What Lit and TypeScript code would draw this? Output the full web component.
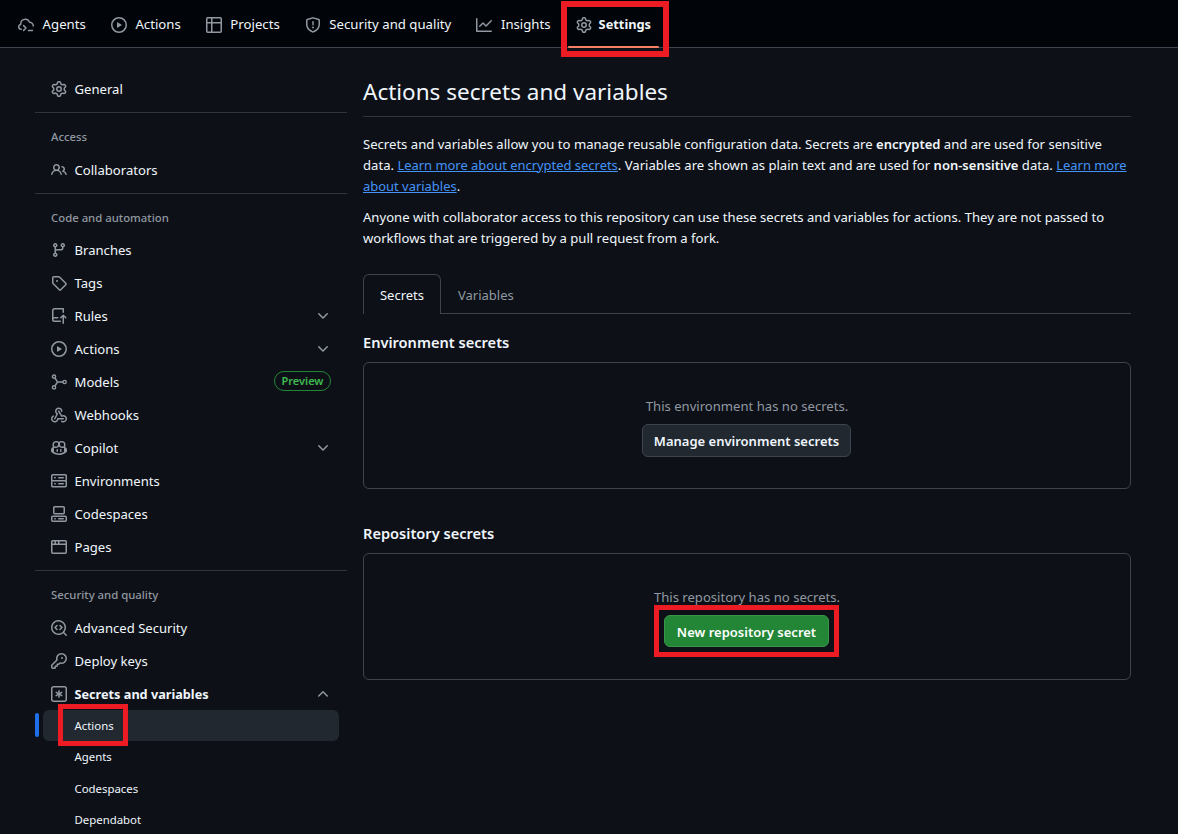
import { LitElement, html, css, svg } from "lit";
import { customElement } from "lit/decorators.js";

const gear = svg`<path d="M8 0a8.2 8.2 0 0 1 .701.031C9.444.095 9.99.645 10.16 1.29l.288 1.107c.018.066.079.158.212.224.231.114.454.243.668.386.123.082.233.09.299.071l1.103-.303c.644-.176 1.392.021 1.82.63.27.385.506.792.704 1.218.315.675.111 1.422-.364 1.891l-.814.806c-.049.048-.098.147-.088.294.016.257.016.515 0 .772-.01.147.038.246.088.294l.814.806c.475.469.679 1.216.364 1.891a7.977 7.977 0 0 1-.704 1.217c-.428.61-1.176.807-1.82.63l-1.102-.302c-.067-.019-.177-.011-.3.071a5.909 5.909 0 0 1-.668.386c-.133.066-.194.158-.211.224l-.29 1.106c-.168.646-.715 1.196-1.458 1.26a8.006 8.006 0 0 1-1.402 0c-.743-.064-1.289-.614-1.458-1.26l-.289-1.106c-.018-.066-.079-.158-.212-.224a5.738 5.738 0 0 1-.668-.386c-.123-.082-.233-.09-.299-.071l-1.103.303c-.644.176-1.392-.021-1.82-.63a8.12 8.12 0 0 1-.704-1.218c-.315-.675-.111-1.422.363-1.891l.815-.806c.05-.048.098-.147.088-.294a6.214 6.214 0 0 1 0-.772c.01-.147-.038-.246-.088-.294l-.815-.806C.635 6.045.431 5.298.746 4.623a7.92 7.92 0 0 1 .704-1.217c.428-.61 1.176-.807 1.82-.63l1.102.302c.067.019.177.011.3-.071.214-.143.437-.272.668-.386.133-.066.194-.158.211-.224l.29-1.106C6.009.645 6.556.095 7.299.03 7.53.01 7.764 0 8 0Zm-.571 1.525c-.036.003-.108.036-.137.146l-.289 1.105c-.147.561-.549.967-.998 1.189-.173.086-.34.183-.5.29-.417.278-.97.423-1.529.27l-1.103-.303c-.109-.03-.175.016-.195.045-.22.312-.412.644-.573.99-.014.031-.021.11.059.19l.815.806c.411.406.562.957.53 1.456a4.709 4.709 0 0 0 0 .582c.032.499-.119 1.05-.53 1.456l-.815.806c-.081.08-.073.159-.059.19.162.346.353.677.573.989.02.03.085.076.195.046l1.102-.303c.56-.153 1.113-.008 1.53.27.161.107.328.204.501.29.447.222.85.629.997 1.189l.289 1.105c.029.109.101.143.137.146a6.6 6.6 0 0 0 1.142 0c.036-.003.108-.036.137-.146l.289-1.105c.147-.561.549-.967.998-1.189.173-.086.34-.183.5-.29.417-.278.97-.423 1.529-.27l1.103.303c.109.029.175-.016.195-.045.22-.313.411-.644.573-.99.014-.031.021-.11-.059-.19l-.815-.806c-.411-.406-.562-.957-.53-1.456a4.709 4.709 0 0 0 0-.582c-.032-.499.119-1.05.53-1.456l.815-.806c.081-.08.073-.159.059-.19a6.464 6.464 0 0 0-.573-.989c-.02-.03-.085-.076-.195-.046l-1.102.303c-.56.153-1.113.008-1.53-.27a4.44 4.44 0 0 0-.501-.29c-.447-.222-.85-.629-.997-1.189l-.289-1.105c-.029-.11-.101-.143-.137-.146a6.6 6.6 0 0 0-1.142 0ZM11 8a3 3 0 1 1-6 0 3 3 0 0 1 6 0ZM9.5 8a1.5 1.5 0 1 0-3.001.001A1.5 1.5 0 0 0 9.5 8Z"/>`;
const play = svg`<path d="M8 0a8 8 0 1 1 0 16A8 8 0 0 1 8 0ZM1.5 8a6.5 6.5 0 1 0 13 0 6.5 6.5 0 0 0-13 0Zm4.879-2.773 4.264 2.559a.25.25 0 0 1 0 .428l-4.264 2.559A.25.25 0 0 1 6 10.559V5.442a.25.25 0 0 1 .379-.215Z"/>`;
const agent = svg`<g fill="none" stroke="currentColor" stroke-width="1.5" stroke-linecap="round" stroke-linejoin="round"><path d="M3.25 12.25H3A2.25 2.25 0 0 1 .75 10v-.4c0-1 .7-1.9 1.7-2.1l.35-.08-.06-.6A4.5 4.5 0 0 1 7.2 2.15h.2a4.2 4.2 0 0 1 3.9 2.6l.2.45c2 0 3.75 1.6 3.75 3.65v.15"/><path d="M5.6 8.6 8 11l-2.4 2.4M10.5 13.4h4"/></g>`;
const table = svg`<path d="M0 1.75C0 .784.784 0 1.75 0h12.5C15.216 0 16 .784 16 1.75v12.5A1.75 1.75 0 0 1 14.25 16H1.75A1.75 1.75 0 0 1 0 14.25ZM6.5 6.5v8h7.75a.25.25 0 0 0 .25-.25V6.5Zm8-1.5V1.75a.25.25 0 0 0-.25-.25H6.5V5Zm-13 1.5v7.75c0 .138.112.25.25.25H5v-8ZM5 5V1.5H1.75a.25.25 0 0 0-.25.25V5Z"/>`;
const shield = svg`<path d="M8.533.133a1.75 1.75 0 0 0-1.066 0l-5.25 1.68A1.75 1.75 0 0 0 1 3.48V7c0 1.566.32 3.182 1.303 4.682.983 1.498 2.585 2.813 5.032 3.855a1.697 1.697 0 0 0 1.33 0c2.447-1.042 4.049-2.357 5.032-3.855C14.68 10.182 15 8.566 15 7V3.48a1.75 1.75 0 0 0-1.217-1.667Zm-.61 1.429a.25.25 0 0 1 .153 0l5.25 1.68a.25.25 0 0 1 .174.238V7c0 1.358-.275 2.666-1.057 3.86-.784 1.194-2.121 2.34-4.366 3.297a.196.196 0 0 1-.154 0c-2.245-.956-3.582-2.104-4.366-3.298C2.775 9.666 2.5 8.36 2.5 7V3.48a.25.25 0 0 1 .174-.237l5.25-1.68ZM9 10.5a1 1 0 1 1-2 0 1 1 0 0 1 2 0Zm-.25-5.75a.75.75 0 1 0-1.5 0v3a.75.75 0 0 0 1.5 0Z"/>`;
const graph = svg`<path d="M1.5 1.75V13.5h13.75a.75.75 0 0 1 0 1.5H.75a.75.75 0 0 1-.75-.75V1.75a.75.75 0 0 1 1.5 0Zm14.28 2.53-5.25 5.25a.75.75 0 0 1-1.06 0L7 7.06 4.28 9.78a.751.751 0 0 1-1.042-.018.751.751 0 0 1-.018-1.042l3.25-3.25a.75.75 0 0 1 1.06 0L10 7.94l4.72-4.72a.751.751 0 0 1 1.042.018.751.751 0 0 1 .018 1.042Z"/>`;
const people = svg`<path d="M2 5.5a3.5 3.5 0 1 1 5.898 2.549 5.508 5.508 0 0 1 3.034 4.084.75.75 0 1 1-1.482.235 4 4 0 0 0-7.9 0 .75.75 0 0 1-1.482-.236A5.507 5.507 0 0 1 3.102 8.05 3.49 3.49 0 0 1 2 5.5ZM11 4a3.001 3.001 0 0 1 2.22 5.018 5.01 5.01 0 0 1 2.56 3.012.749.749 0 0 1-.885.954.752.752 0 0 1-.549-.514 3.507 3.507 0 0 0-2.522-2.372.75.75 0 0 1-.574-.73v-.352a.75.75 0 0 1 .416-.672A1.5 1.5 0 0 0 11 5.5.75.75 0 0 1 11 4Zm-5.5-.5a2 2 0 1 0-.001 3.999A2 2 0 0 0 5.5 3.5Z"/>`;
const branch = svg`<path d="M9.5 3.25a2.25 2.25 0 1 1 3 2.122V6A2.5 2.5 0 0 1 10 8.5H6a1 1 0 0 0-1 1v1.128a2.251 2.251 0 1 1-1.5 0V5.372a2.25 2.25 0 1 1 1.5 0v1.836A2.493 2.493 0 0 1 6 7h4a1 1 0 0 0 1-1v-.628A2.25 2.25 0 0 1 9.5 3.25Zm-6 0a.75.75 0 1 0 1.5 0 .75.75 0 0 0-1.5 0Zm8.25-.75a.75.75 0 1 0 0 1.5.75.75 0 0 0 0-1.5ZM4.25 12a.75.75 0 1 0 0 1.5.75.75 0 0 0 0-1.5Z"/>`;
const tag = svg`<path d="M1 7.775V2.75C1 1.784 1.784 1 2.75 1h5.025c.464 0 .91.184 1.238.513l6.25 6.25a1.75 1.75 0 0 1 0 2.474l-5.026 5.026a1.75 1.75 0 0 1-2.474 0l-6.25-6.25A1.752 1.752 0 0 1 1 7.775Zm1.5 0c0 .066.026.13.073.177l6.25 6.25a.25.25 0 0 0 .354 0l5.025-5.025a.25.25 0 0 0 0-.354l-6.25-6.25a.25.25 0 0 0-.177-.073H2.75a.25.25 0 0 0-.25.25ZM6 5a1 1 0 1 1 0 2 1 1 0 0 1 0-2Z"/>`;
const repoPush = svg`<path d="M1 2.5A2.5 2.5 0 0 1 3.5 0h8.75a.75.75 0 0 1 .75.75v3.5a.75.75 0 0 1-1.5 0V1.5h-8a1 1 0 0 0-1 1v6.708A2.493 2.493 0 0 1 3.5 9h3.25a.75.75 0 0 1 0 1.5H3.5a1 1 0 0 0 0 2h5.75a.75.75 0 0 1 0 1.5H3.5A2.5 2.5 0 0 1 1 11.5Zm13.23 7.79h-.001l-1.224-1.224v6.184a.75.75 0 0 1-1.5 0V9.066L10.28 10.29a.75.75 0 0 1-1.06-1.061l2.505-2.504a.75.75 0 0 1 1.06 0L15.29 9.23a.751.751 0 0 1-.018 1.042.751.751 0 0 1-1.042.018Z"/>`;
const model = svg`<g fill="none" stroke="currentColor" stroke-width="1.4"><circle cx="3" cy="2.6" r="1.6"/><circle cx="3" cy="13.4" r="1.6"/><circle cx="13.6" cy="8" r="1.6"/><path d="M3.9 4 5.9 7c.4.6.4 1.4 0 2l-2 3M6.2 8H12"/></g>`;
const webhook = svg`<path d="M5.5 4.25a2.25 2.25 0 0 1 4.5 0 .75.75 0 0 0 1.5 0 3.75 3.75 0 1 0-6.14 2.889l-2.272 4.258a.75.75 0 0 0 1.324.706L7 7.25a.75.75 0 0 0-.309-1.015A2.25 2.25 0 0 1 5.5 4.25Z"/><path d="M7.364 3.607a.75.75 0 0 1 1.03.257l2.608 4.349a3.75 3.75 0 1 1-.628 6.785.75.75 0 0 1 .752-1.299 2.25 2.25 0 1 0-.033-3.88.75.75 0 0 1-1.03-.256L7.107 4.636a.75.75 0 0 1 .257-1.03Z"/><path d="M2.9 8.776A.75.75 0 0 1 2.625 9.8 2.25 2.25 0 1 0 6 11.75a.75.75 0 0 1 .75-.751h5.5a.75.75 0 0 1 0 1.5H7.425a3.751 3.751 0 1 1-5.55-3.998.75.75 0 0 1 1.024.274Z"/>`;
const copilot = svg`<path d="M7.998 15.035c-4.562 0-7.873-2.914-7.998-3.749V9.338c.085-.628.677-1.686 1.588-2.065.013-.07.024-.143.036-.218.029-.183.06-.384.126-.612-.201-.508-.254-1.084-.254-1.656 0-.87.128-1.769.693-2.484.579-.733 1.494-1.124 2.724-1.261 1.206-.134 2.262.034 2.944.765.05.053.096.108.139.165.044-.057.094-.112.143-.165.682-.731 1.738-.899 2.944-.765 1.23.137 2.145.528 2.724 1.261.566.715.693 1.614.693 2.484 0 .572-.053 1.148-.254 1.656.066.228.098.429.126.612.012.076.024.148.037.218.924.385 1.522 1.471 1.591 2.095v1.872c0 .766-3.351 3.795-8.002 3.795Zm0-1.485c2.28 0 4.584-1.11 5.002-1.433V7.862l-.023-.116c-.49.21-1.075.291-1.727.291-1.146 0-2.059-.327-2.71-.991A3.222 3.222 0 0 1 8 6.303a3.24 3.24 0 0 1-.544.743c-.65.664-1.563.991-2.71.991-.652 0-1.236-.081-1.727-.291l-.023.116v4.255c.419.323 2.722 1.433 5.002 1.433ZM6.762 2.83c-.193-.206-.637-.413-1.682-.297-1.019.113-1.479.404-1.713.7-.247.312-.369.789-.369 1.554 0 .793.129 1.171.308 1.371.162.181.519.379 1.442.379.853 0 1.339-.235 1.638-.54.315-.322.527-.827.617-1.553.117-.935-.037-1.395-.241-1.614Zm4.155-.297c-1.044-.116-1.488.091-1.681.297-.204.219-.359.679-.242 1.614.091.726.303 1.231.618 1.553.299.305.784.54 1.638.54.922 0 1.28-.198 1.442-.379.179-.2.308-.578.308-1.371 0-.765-.123-1.242-.37-1.554-.233-.296-.693-.587-1.713-.7Z"/><path d="M6.25 9.037a.75.75 0 0 1 .75.75v1.501a.75.75 0 0 1-1.5 0V9.787a.75.75 0 0 1 .75-.75Zm4.25.75v1.501a.75.75 0 0 1-1.5 0V9.787a.75.75 0 0 1 1.5 0Z"/>`;
const server = svg`<path d="M1.75 1h12.5c.966 0 1.75.784 1.75 1.75v4c0 .372-.116.717-.314 1 .198.283.314.628.314 1v4a1.75 1.75 0 0 1-1.75 1.75H1.75A1.75 1.75 0 0 1 0 13.25v-4c0-.372.116-.717.314-1a1.739 1.739 0 0 1-.314-1v-4C0 1.784.784 1 1.75 1ZM1.5 2.75v4c0 .138.112.25.25.25h12.5a.25.25 0 0 0 .25-.25v-4a.25.25 0 0 0-.25-.25H1.75a.25.25 0 0 0-.25.25Zm.25 5.75a.25.25 0 0 0-.25.25v4c0 .138.112.25.25.25h12.5a.25.25 0 0 0 .25-.25v-4a.25.25 0 0 0-.25-.25ZM7 4.75A.75.75 0 0 1 7.75 4h4.5a.75.75 0 0 1 0 1.5h-4.5A.75.75 0 0 1 7 4.75ZM7.75 10h4.5a.75.75 0 0 1 0 1.5h-4.5a.75.75 0 0 1 0-1.5ZM3 4.75A.75.75 0 0 1 3.75 4h.5a.75.75 0 0 1 0 1.5h-.5A.75.75 0 0 1 3 4.75ZM3.75 10h.5a.75.75 0 0 1 0 1.5h-.5a.75.75 0 0 1 0-1.5Z"/>`;
const codespaces = svg`<path d="M0 11.25c0-.966.784-1.75 1.75-1.75h12.5c.966 0 1.75.784 1.75 1.75v3A1.75 1.75 0 0 1 14.25 16H1.75A1.75 1.75 0 0 1 0 14.25Zm2-9.5C2 .784 2.784 0 3.75 0h8.5C13.216 0 14 .784 14 1.75v5a1.75 1.75 0 0 1-1.75 1.75h-8.5A1.75 1.75 0 0 1 2 6.75Zm1.75-.25a.25.25 0 0 0-.25.25v5c0 .138.112.25.25.25h8.5a.25.25 0 0 0 .25-.25v-5a.25.25 0 0 0-.25-.25Zm-2 9.5a.25.25 0 0 0-.25.25v3c0 .138.112.25.25.25h12.5a.25.25 0 0 0 .25-.25v-3a.25.25 0 0 0-.25-.25Z"/><path d="M7 12.75a.75.75 0 0 1 .75-.75h4.5a.75.75 0 0 1 0 1.5h-4.5a.75.75 0 0 1-.75-.75Zm-4 0a.75.75 0 0 1 .75-.75h.5a.75.75 0 0 1 0 1.5h-.5a.75.75 0 0 1-.75-.75Z"/>`;
const browser = svg`<path d="M0 2.75C0 1.784.784 1 1.75 1h12.5c.966 0 1.75.784 1.75 1.75v10.5A1.75 1.75 0 0 1 14.25 15H1.75A1.75 1.75 0 0 1 0 13.25ZM14.5 6h-13v7.25c0 .138.112.25.25.25h12.5a.25.25 0 0 0 .25-.25Zm-6-3.5v2h6V2.75a.25.25 0 0 0-.25-.25ZM5 2.5v2h2v-2Zm-3.25 0a.25.25 0 0 0-.25.25V4.5h2v-2Z"/>`;
const codescan = svg`<path d="M8.47 4.97a.75.75 0 0 0 0 1.06L9.94 7.5 8.47 8.97a.75.75 0 1 0 1.06 1.06l2-2a.75.75 0 0 0 0-1.06l-2-2a.75.75 0 0 0-1.06 0ZM6.53 6.03a.75.75 0 0 0-1.06-1.06l-2 2a.75.75 0 0 0 0 1.06l2 2a.75.75 0 1 0 1.06-1.06L5.06 7.5l1.47-1.47Z"/><path d="M12.246 13.307a7.501 7.501 0 1 1 1.06-1.06l2.474 2.473a.749.749 0 0 1-.326 1.275.749.749 0 0 1-.734-.215ZM1.5 7.5a6.002 6.002 0 0 0 3.608 5.504 6.002 6.002 0 0 0 6.486-1.117.75.75 0 0 1 .292-.293A6 6 0 1 0 1.5 7.5Z"/>`;
const key = svg`<path d="M10.5 0a5.499 5.499 0 1 1-1.288 10.848l-.932.932a.749.749 0 0 1-.53.22H7v.75a.749.749 0 0 1-.22.53l-.5.5a.749.749 0 0 1-.53.22H5v.75a.749.749 0 0 1-.22.53l-.5.5a.749.749 0 0 1-.53.22h-2A1.75 1.75 0 0 1 0 14.25v-2c0-.199.079-.389.22-.53l4.932-4.932A5.5 5.5 0 0 1 10.5 0Zm-4 5.5c-.001.431.069.86.205 1.269a.75.75 0 0 1-.181.768L1.5 12.56v1.69c0 .138.112.25.25.25h1.69l.06-.06v-1.19a.75.75 0 0 1 .75-.75h1.19l.06-.06v-1.19a.75.75 0 0 1 .75-.75h1.19l1.023-1.025a.75.75 0 0 1 .768-.18A4 4 0 1 0 6.5 5.5ZM11 6a1 1 0 1 1 0-2 1 1 0 0 1 0 2Z"/>`;
const asterisk = svg`<path d="M0 2.75A2.75 2.75 0 0 1 2.75 0h10.5A2.75 2.75 0 0 1 16 2.75v10.5A2.75 2.75 0 0 1 13.25 16H2.75A2.75 2.75 0 0 1 0 13.25Zm1.5 0v10.5c0 .69.56 1.25 1.25 1.25h10.5c.69 0 1.25-.56 1.25-1.25V2.75c0-.69-.56-1.25-1.25-1.25H2.75c-.69 0-1.25.56-1.25 1.25Z"/><path d="M8 4a.75.75 0 0 1 .75.75V6.7l1.69-.975a.75.75 0 0 1 .75 1.3L9.5 8l1.69.976a.75.75 0 0 1-.75 1.298L8.75 9.3v1.951a.75.75 0 0 1-1.5 0V9.299l-1.69.976a.75.75 0 0 1-.75-1.3L6.5 8l-1.69-.975a.75.75 0 0 1 .75-1.3l1.69.976V4.75A.75.75 0 0 1 8 4Z"/>`;
const down = svg`<path d="M12.78 5.22a.749.749 0 0 1 0 1.06l-4.25 4.25a.749.749 0 0 1-1.06 0L3.22 6.28a.749.749 0 1 1 1.06-1.06L8 8.939l3.72-3.719a.749.749 0 0 1 1.06 0Z"/>`;
const up = svg`<path d="M3.22 10.53a.749.749 0 0 1 0-1.06l4.25-4.25a.749.749 0 0 1 1.06 0l4.25 4.25a.749.749 0 1 1-1.06 1.06L8 6.811 4.28 10.53a.749.749 0 0 1-1.06 0Z"/>`;

const icon = (p: unknown) => html`<svg class="icon" viewBox="0 0 16 16" width="16" height="16" fill="currentColor">${p}</svg>`;

const tabs = [
  { label: "Agents", i: agent },
  { label: "Actions", i: play },
  { label: "Projects", i: table },
  { label: "Security and quality", i: shield },
  { label: "Insights", i: graph },
];

@customElement("app-root")
export class AppRoot extends LitElement {
  static styles = css`
    :host {
      display: block;
      height: 834px;
      overflow: hidden;
      background: #0d1117;
      color: #f0f6fc;
      font-family: "Noto Sans", "Liberation Sans", sans-serif;
      font-size: 13.1px;
      line-height: 21px;
    }
    * { box-sizing: border-box; }
    .icon { flex: none; color: #9198a1; display: block; }
    .mark { position: absolute; border: 5px solid #ed1c24; pointer-events: none; }

    header {
      height: 48px;
      background: #010409;
      border-bottom: 1px solid #3d444d;
      display: flex;
      gap: 9px;
      padding-left: 10px;
    }
    .tab {
      position: relative;
      display: flex;
      align-items: center;
      gap: 8.6px;
      padding: 2px 8px 0;
      height: 47px;
      font-size: 13.2px;
    }
    .tab.current { font-weight: 700; font-size: 12.8px; gap: 7px; }
    .tab.current::after {
      content: "";
      position: absolute;
      left: 0;
      right: 0;
      bottom: -1px;
      height: 2px;
      border-radius: 2px;
      background: #f78166;
    }
    .tab .mark { left: -7px; right: -10px; top: 1px; bottom: -10px; border-width: 6px; }

    .page { display: flex; padding-left: 35px; gap: 16px; }
    aside { width: 312px; flex: none; padding-top: 25px; }
    main { width: 768px; flex: none; padding-top: 24px; }

    .row {
      position: relative;
      height: 33px;
      display: flex;
      align-items: center;
      gap: 7.5px;
      padding: 0 16px;
    }
    .row .icon { margin-top: -2px; }
    .row .label { flex: 1; }
    .row.bold .label { font-weight: 700; font-size: 12.7px; }
    .chev { color: #9198a1; }
    .pill {
      border: 1px solid #238636;
      border-radius: 999px;
      color: #3fb950;
      font-size: 11px;
      font-weight: 600;
      line-height: 18px;
      height: 20px;
      padding: 0 6.5px;
      margin-top: -4px;
    }
    .rule { height: 1px; background: #3d444db3; margin: 6px 0; }
    .group {
      height: 20px;
      line-height: 20px;
      padding-left: 16px;
      margin-top: 14px;
      margin-bottom: 7px;
      font-size: 11.35px;
      font-weight: 500;
      color: #9198a1;
    }
    .group.tight { margin-bottom: 6px; }
    .sub {
      position: relative;
      height: 31.33px;
      margin: 0 8px;
      padding-left: 31.5px;
      display: flex;
      align-items: center;
      font-size: 11.4px;
      border-radius: 6px;
    }
    .sub.current { background: #212830; margin-top: -1px; }
    .sub.current::before {
      content: "";
      position: absolute;
      left: -8px;
      top: 3px;
      bottom: 4px;
      width: 4px;
      border-radius: 6px;
      background: #1f6feb;
    }
    .sub .mark { left: 15px; top: -6px; width: 70px; height: 42px; }

    h1 {
      margin: 0 0 17px;
      height: 45px;
      padding: 2px 0 6px;
      border-bottom: 1px solid #3d444db3;
      font-size: 22.5px;
      font-weight: 400;
      line-height: 36px;
    }
    p { margin: 0 0 10px; }
    a { color: #4493f8; text-decoration: underline; font-size: 12.95px; }
    b { font-weight: 600; font-size: 13px; }

    .tabnav {
      display: flex;
      margin-top: 25px;
      border-bottom: 1px solid #3d444d;
      height: 40px;
      font-size: 13px;
    }
    .tabnav div {
      height: 40px;
      padding: 2px 16px 0 17px;
      display: flex;
      align-items: center;
      color: #9198a1;
    }
    .tabnav .on {
      color: #f0f6fc;
      border: 1px solid #3d444d;
      border-bottom: 0;
      border-radius: 6px 6px 0 0;
      background: #0d1117;
      width: 78px;
      padding: 1px 0 0;
      justify-content: center;
    }
    h3 { margin: 0; font-size: 14.6px; font-weight: 600; line-height: 21px; }
    .env-title { margin-top: 18px; margin-bottom: 9px; }
    .repo-title { margin-top: 34px; margin-bottom: 9px; }
    .blank {
      height: 127px;
      border: 1px solid #3d444d;
      border-radius: 6px;
      display: flex;
      flex-direction: column;
      align-items: center;
      padding-top: 33px;
      color: #9198a1;
    }
    .btn {
      position: relative;
      display: flex;
      align-items: center;
      justify-content: center;
      height: 32px;
      margin-right: 1px;
      border-radius: 6px;
      border: 1px solid #3d444d;
      background: #212830;
      color: #f0f6fc;
      font-size: 13px;
      font-weight: 600;
    }
    .btn.env { width: 209px; margin-top: 7px; height: 33px; padding-top: 2px; }
    .btn.new {
      width: 165px;
      margin-top: 7px;
      padding-top: 3px;
      background: #238636;
      border-color: #3b9748;
      color: #fff;
    }
    .btn .mark { left: -11px; right: -11px; top: -11px; bottom: -11px; }
  `;

  private row(i: unknown, label: string, extra: unknown = null, cls = "") {
    return html`<div class="row ${cls}">${icon(i)}<span class="label">${label}</span>${extra}</div>`;
  }

  render() {
    const chev = html`<span class="chev">${icon(down)}</span>`;
    return html`
      <header>
        ${tabs.map((t) => html`<div class="tab">${icon(t.i)}<span>${t.label}</span></div>`)}
        <div class="tab current">${icon(gear)}<span>Settings</span><i class="mark"></i></div>
      </header>
      <div class="page">
        <aside>
          ${this.row(gear, "General")}
          <div class="rule"></div>
          <div class="group">Access</div>
          ${this.row(people, "Collaborators")}
          <div class="rule"></div>
          <div class="group tight">Code and automation</div>
          ${this.row(branch, "Branches")}
          ${this.row(tag, "Tags")}
          ${this.row(repoPush, "Rules", chev)}
          ${this.row(play, "Actions", chev)}
          ${this.row(model, "Models", html`<span class="pill">Preview</span>`)}
          ${this.row(webhook, "Webhooks")}
          ${this.row(copilot, "Copilot", chev)}
          ${this.row(server, "Environments")}
          ${this.row(codespaces, "Codespaces")}
          ${this.row(browser, "Pages")}
          <div class="rule"></div>
          <div class="group">Security and quality</div>
          ${this.row(codescan, "Advanced Security")}
          ${this.row(key, "Deploy keys")}
          ${this.row(asterisk, "Secrets and variables", html`<span class="chev">${icon(up)}</span>`, "bold")}
          <div class="sub current">Actions<i class="mark"></i></div>
          <div class="sub">Agents</div>
          <div class="sub">Codespaces</div>
          <div class="sub">Dependabot</div>
        </aside>
        <main>
          <h1>Actions secrets and variables</h1>
          <p>
            Secrets and variables allow you to manage reusable configuration data. Secrets are <b>encrypted</b> and are used for sensitive data.
            <a>Learn more about encrypted secrets</a>. Variables are shown as plain text and are used for <b>non-sensitive</b> data.
            <a>Learn more about variables</a>.
          </p>
          <p>
            Anyone with collaborator access to this repository can use these secrets and variables for actions. They are not passed to workflows that are triggered by a pull request from a fork.
          </p>
          <div class="tabnav"><div class="on">Secrets</div><div>Variables</div></div>
          <h3 class="env-title">Environment secrets</h3>
          <div class="blank">
            <span>This environment has no secrets.</span>
            <div class="btn env">Manage environment secrets</div>
          </div>
          <h3 class="repo-title">Repository secrets</h3>
          <div class="blank">
            <span>This repository has no secrets.</span>
            <div class="btn new">New repository secret<i class="mark"></i></div>
          </div>
        </main>
      </div>
    `;
  }
}
